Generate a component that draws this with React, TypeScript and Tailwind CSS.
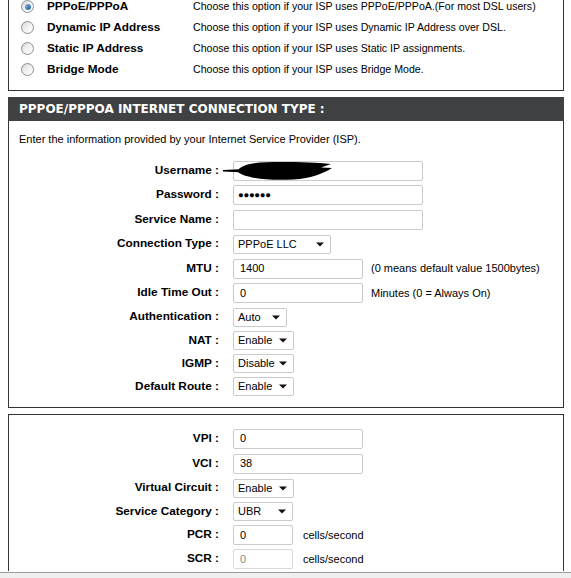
import React from "react";

const FONT = { fontFamily: '"Liberation Sans", Arial, sans-serif' };

function Radio({ checked }: { checked?: boolean }) {
  return (
    <div className="flex h-[13px] w-[13px] items-center justify-center rounded-full border border-[#8e8f8f] bg-gradient-to-br from-[#d6d6d6] via-[#f2f2f2] to-white">
      {checked ? (
        <div className="h-[6px] w-[6px] rounded-full bg-gradient-to-br from-[#7fb3e6] to-[#1b5a9e]" />
      ) : null}
    </div>
  );
}

function TextBox({ value, width, muted }: { value?: string; width: string; muted?: boolean }) {
  return (
    <div
      className={`flex h-[20px] items-center rounded-[2px] border pl-[6px] text-[11px] ${width} ${
        muted ? "border-[#d9d9d9] text-[#8a8a8a]" : "border-[#cbcbcb] text-black"
      }`}
    >
      {value}
    </div>
  );
}

function Select({ value, width }: { value: string; width: string }) {
  return (
    <div
      className={`flex h-[19px] items-center justify-between rounded-[2px] border border-[#cbcbcb] pl-[4px] pr-[6px] text-[11px] ${width}`}
    >
      <span>{value}</span>
      <svg width="8" height="5" viewBox="0 0 8 5">
        <path d="M0 0.5h8L4 4.5z" fill="#111" />
      </svg>
    </div>
  );
}

function Row({
  label,
  h,
  children,
  note,
}: {
  label: string;
  h: string;
  children: React.ReactNode;
  note?: string;
}) {
  return (
    <div className={`flex items-center ${h}`}>
      <div className="w-[211px] pr-[1px] text-right text-[11.8px] font-bold">{label}</div>
      <div className="ml-[13px]">{children}</div>
      {note ? <div className="ml-[8px] text-[11px]">{note}</div> : null}
    </div>
  );
}

const MODES = [
  { name: "PPPoE/PPPoA", desc: "Choose this option if your ISP uses PPPoE/PPPoA.(For most DSL users)", checked: true },
  { name: "Dynamic IP Address", desc: "Choose this option if your ISP uses Dynamic IP Address over DSL." },
  { name: "Static IP Address", desc: "Choose this option if your ISP uses Static IP assignments." },
  { name: "Bridge Mode", desc: "Choose this option if your ISP uses Bridge Mode." },
];

export default function App() {
  return (
    <div className="relative flex h-[578px] w-[571px] flex-col overflow-hidden bg-white text-black" style={FONT}>
      <div className="px-[8px]">
        {/* WAN mode list, top border scrolled out of view */}
        <div className="w-[556px] border-x border-b border-[#333] pb-[10px]">
          <div className="mt-[-4px]">
            {MODES.map((m) => (
              <div key={m.name} className="flex h-[21px] items-center">
                <div className="ml-[12px] w-[26px]">
                  <Radio checked={m.checked} />
                </div>
                <div className="w-[146px] text-[11.8px] font-bold">{m.name}</div>
                <div className="text-[10.6px]">{m.desc}</div>
              </div>
            ))}
          </div>
        </div>

        <div className="mt-[6px] w-[556px]">
          <div
            className="flex h-[24px] items-center bg-[#3f4142] pl-[11px] text-[12px] font-bold text-white"
            style={{ fontFamily: '"DejaVu Sans", Verdana, sans-serif' }}
          >
            PPPOE/PPPOA INTERNET CONNECTION TYPE :
          </div>
          <div className="border-x border-b border-[#333] pb-[9px] pt-[11px]">
            <div className="mb-[12px] flex h-[14px] items-center pl-[10px] text-[11px]">
              Enter the information provided by your Internet Service Provider (ISP).
            </div>
            <div className="relative">
              <Row label="Username :" h="h-[25px]">
                <TextBox width="w-[190px]" />
              </Row>
              {/* redaction scribble over the username */}
              <svg
                className="absolute left-[214px] top-[4px] h-[18px] w-[110px]"
                width="110"
                height="18"
                viewBox="0 0 110 18"
              >
                <path d="M0 8 L22 7 L22 10.5 L0 9.5 Z" fill="#000" />
                <path
                  d="M17 6 C24 0.5 38 0 58 0 C78 0 94 0.5 108 2 L98 5.5 L109 6 C101 11 89 16.5 70 17.5 C50 18.5 32 17.5 19 12.5 C14 10.5 14 8 17 6 Z"
                  fill="#000"
                />
              </svg>
            </div>
            <Row label="Password :" h="h-[24px]">
              <div className="flex h-[20px] w-[190px] items-center rounded-[2px] border border-[#cbcbcb] pl-[4px] text-[9.5px] tracking-[-0.3px]">
                ●●●●●●
              </div>
            </Row>
            <Row label="Service Name :" h="h-[25px]">
              <TextBox width="w-[190px]" />
            </Row>
            <Row label="Connection Type :" h="h-[24px]">
              <Select value="PPPoE LLC" width="w-[98px]" />
            </Row>
            <Row label="MTU :" h="h-[25px]" note="(0 means default value 1500bytes)">
              <TextBox value="1400" width="w-[130px]" />
            </Row>
            <Row label="Idle Time Out :" h="h-[24px]" note="Minutes (0 = Always On)">
              <TextBox value="0" width="w-[130px]" />
            </Row>
            <Row label="Authentication :" h="h-[24px]">
              <Select value="Auto" width="w-[54px]" />
            </Row>
            <Row label="NAT :" h="h-[23px]">
              <Select value="Enable" width="w-[61px]" />
            </Row>
            <Row label="IGMP :" h="h-[23px]">
              <Select value="Disable" width="w-[61px]" />
            </Row>
            <Row label="Default Route :" h="h-[23px]">
              <Select value="Enable" width="w-[61px]" />
            </Row>
          </div>
        </div>

        <div className="mt-[6px] w-[556px] border-x border-t border-[#333] pt-[11px]">
          <Row label="VPI :" h="h-[25px]">
            <TextBox value="0" width="w-[130px]" />
          </Row>
          <Row label="VCI :" h="h-[25px]">
            <TextBox value="38" width="w-[130px]" />
          </Row>
          <Row label="Virtual Circuit :" h="h-[24px]">
            <Select value="Enable" width="w-[61px]" />
          </Row>
          <Row label="Service Category :" h="h-[23px]">
            <Select value="UBR" width="w-[60px]" />
          </Row>
          <Row label="PCR :" h="h-[24px]">
            <div className="flex items-center">
              <TextBox value="0" width="w-[60px]" />
              <span className="ml-[10px] text-[11px]">cells/second</span>
            </div>
          </Row>
          <Row label="SCR :" h="h-[24px]">
            <div className="flex items-center">
              <TextBox value="0" width="w-[60px]" muted />
              <span className="ml-[10px] text-[11px]">cells/second</span>
            </div>
          </Row>
        </div>
      </div>
      <div className="mt-auto h-[6px] border-t border-[#9c9c9c] bg-[#f0f0f0]" />
    </div>
  );
}
